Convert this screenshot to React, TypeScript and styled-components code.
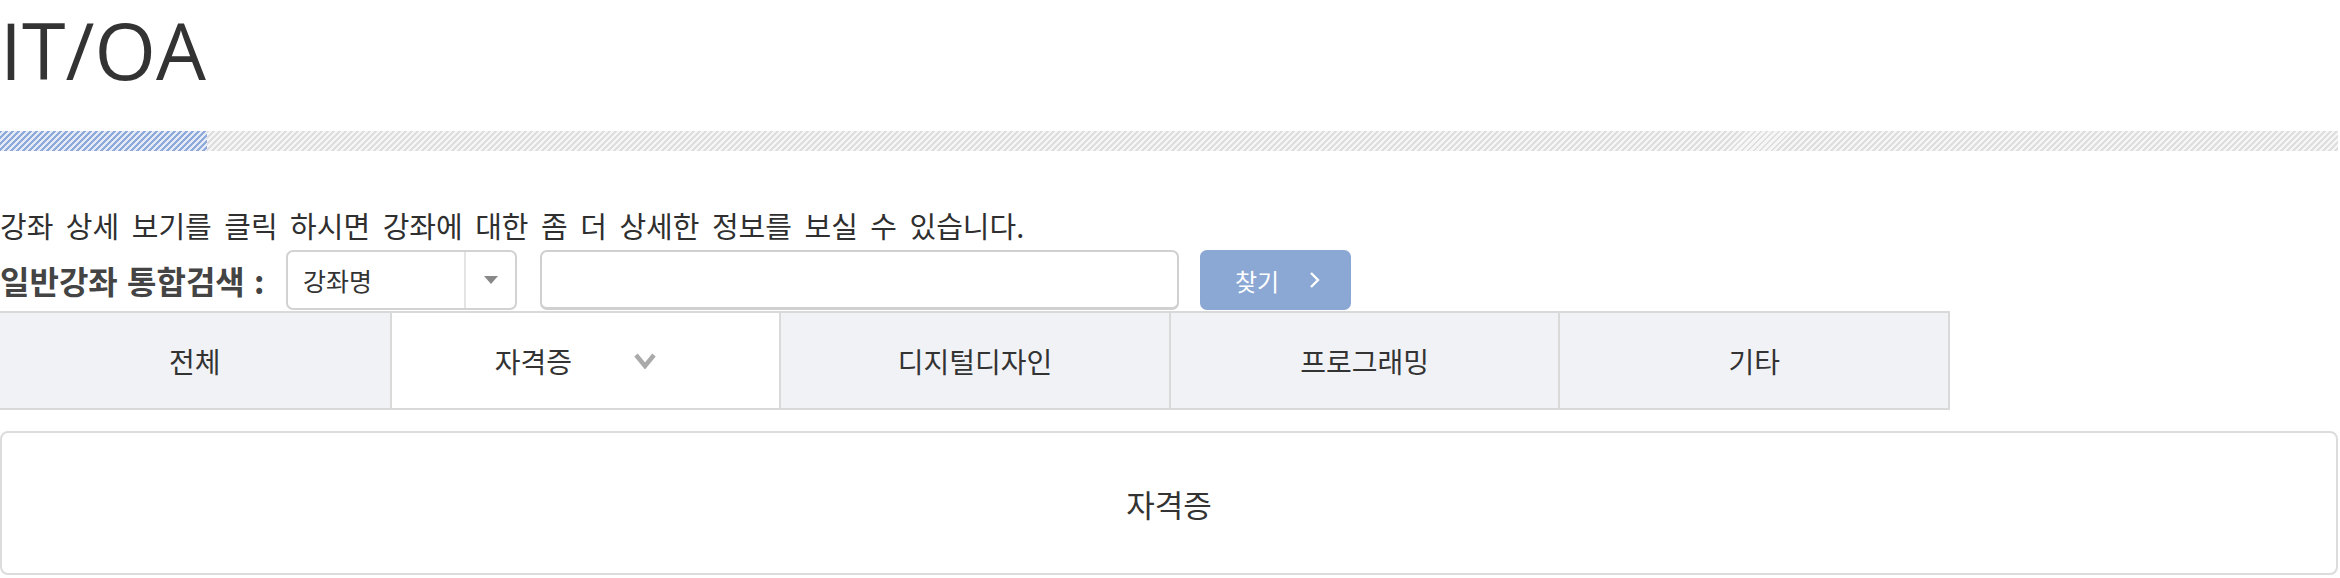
import React from "react";
import styled, { createGlobalStyle } from "styled-components";

const GlobalStyle = createGlobalStyle`
  html, body { margin: 0; padding: 0; background: #fff; }
  body {
    font-family: "Noto Sans CJK KR", "Noto Sans", sans-serif;
    color: #333;
  }
  * { box-sizing: border-box; }
`;

const Page = styled.div`
  width: 2338px;
`;

const Title = styled.h1`
  margin: 0;
  padding-top: 10px;
  font-family: "Open Sans", "Noto Sans", sans-serif;
  font-weight: 400;
  font-size: 79px;
  line-height: 79px;
  color: #333;
`;

const Stripe = styled.div`
  margin-top: 42px;
  height: 20px;
  display: flex;
`;

const StripeSeg = styled.div<{ $tone: "blue" | "gray" }>`
  height: 100%;
  ${(p) => (p.$tone === "blue" ? "width: 207px;" : "flex: 1;")}
  background: ${(p) =>
    p.$tone === "blue"
      ? "repeating-linear-gradient(135deg, #8eaadb 0 2.1px, #e4ebf7 2.1px 4.24px)"
      : "repeating-linear-gradient(135deg, #dedede 0 2.1px, #f6f6f6 2.1px 4.24px)"};
`;

const Description = styled.p`
  margin: 56px 0 0;
  font-size: 29px;
  line-height: 36px;
  word-spacing: 6px;
  color: #2f2f2f;
`;

const SearchRow = styled.div`
  margin-top: 7px;
  height: 60px;
  display: flex;
  align-items: center;
`;

const SearchLabel = styled.span`
  width: 286px;
  font-size: 32px;
  font-weight: 700;
  word-spacing: 2px;
  color: #444;
  white-space: nowrap;
`;

const SelectBox = styled.div`
  width: 231px;
  height: 60px;
  border: 2px solid #d2d2d2;
  border-radius: 7px;
  display: flex;
  align-items: stretch;
`;

const SelectValue = styled.span`
  flex: 1;
  display: flex;
  align-items: center;
  padding-left: 15px;
  font-size: 25px;
  color: #333;
`;

const SelectArrow = styled.span`
  width: 51px;
  border-left: 2px solid #e4e4e4;
  display: flex;
  align-items: center;
  justify-content: center;
`;

const TextInput = styled.input`
  margin-left: 23px;
  width: 639px;
  height: 60px;
  border: 2px solid #d0d0d0;
  border-bottom-width: 3px;
  border-radius: 7px;
  background: #fff;
  font-size: 25px;
  padding: 0 12px;
  outline: none;
`;

const FindButton = styled.button`
  margin-left: 21px;
  width: 151px;
  height: 60px;
  border: none;
  border-radius: 7px;
  background: #8ba7d4;
  color: #fff;
  font-family: "Noto Sans CJK KR", "Noto Sans", sans-serif;
  font-size: 24px;
  display: flex;
  align-items: center;
  justify-content: center;
  gap: 30px;
  padding: 0 0 0 4px;
`;

const Tabs = styled.div`
  margin-top: 1px;
  width: 1950px;
  height: 99px;
  display: grid;
  grid-template-columns: repeat(5, 1fr);
  border-top: 2px solid #d9d9d9;
  border-bottom: 2px solid #d9d9d9;
  border-right: 2px solid #d9d9d9;
`;

const Tab = styled.div<{ $active?: boolean }>`
  display: flex;
  align-items: center;
  justify-content: center;
  background: ${(p) => (p.$active ? "#fff" : "#f1f2f6")};
  border-left: 2px solid #dadada;
  &:first-child { border-left: none; }
  font-size: 28px;
  color: #333;
`;

const TabIcon = styled.span`
  margin-left: 62px;
  margin-right: 20px;
  display: flex;
  align-items: center;
`;

const ResultBox = styled.div`
  margin-top: 21px;
  height: 144px;
  border: 2px solid #dcdcdc;
  border-radius: 8px;
  display: flex;
  align-items: center;
  justify-content: center;
  font-size: 31px;
  color: #333;
`;

const tabs = ["전체", "자격증", "디지털디자인", "프로그래밍", "기타"];

export default function App() {
  return (
    <Page>
      <GlobalStyle />
      <Title>IT/OA</Title>
      <Stripe>
        <StripeSeg $tone="blue" />
        <StripeSeg $tone="gray" />
      </Stripe>
      <Description>
        강좌 상세 보기를 클릭 하시면 강좌에 대한 좀 더 상세한 정보를 보실 수 있습니다.
      </Description>
      <SearchRow>
        <SearchLabel>일반강좌 통합검색 :</SearchLabel>
        <SelectBox>
          <SelectValue>강좌명</SelectValue>
          <SelectArrow>
            <svg width="14" height="8" viewBox="0 0 14 8">
              <path d="M0 0 L14 0 L7 8 Z" fill="#888" />
            </svg>
          </SelectArrow>
        </SelectBox>
        <TextInput type="text" />
        <FindButton>
          <span>찾기</span>
          <svg width="11" height="18" viewBox="0 0 11 18">
            <path d="M2 2 L9 9 L2 16" fill="none" stroke="#fff" strokeWidth="2.4" />
          </svg>
        </FindButton>
      </SearchRow>
      <Tabs>
        {tabs.map((t, i) => (
          <Tab key={t} $active={i === 1}>
            {t}
            {i === 1 && (
              <TabIcon>
                <svg width="22" height="16" viewBox="0 0 22 16">
                  <path d="M2 2 L11 13 L20 2" fill="none" stroke="#aaa" strokeWidth="4.5" />
                </svg>
              </TabIcon>
            )}
          </Tab>
        ))}
      </Tabs>
      <ResultBox>자격증</ResultBox>
    </Page>
  );
}
